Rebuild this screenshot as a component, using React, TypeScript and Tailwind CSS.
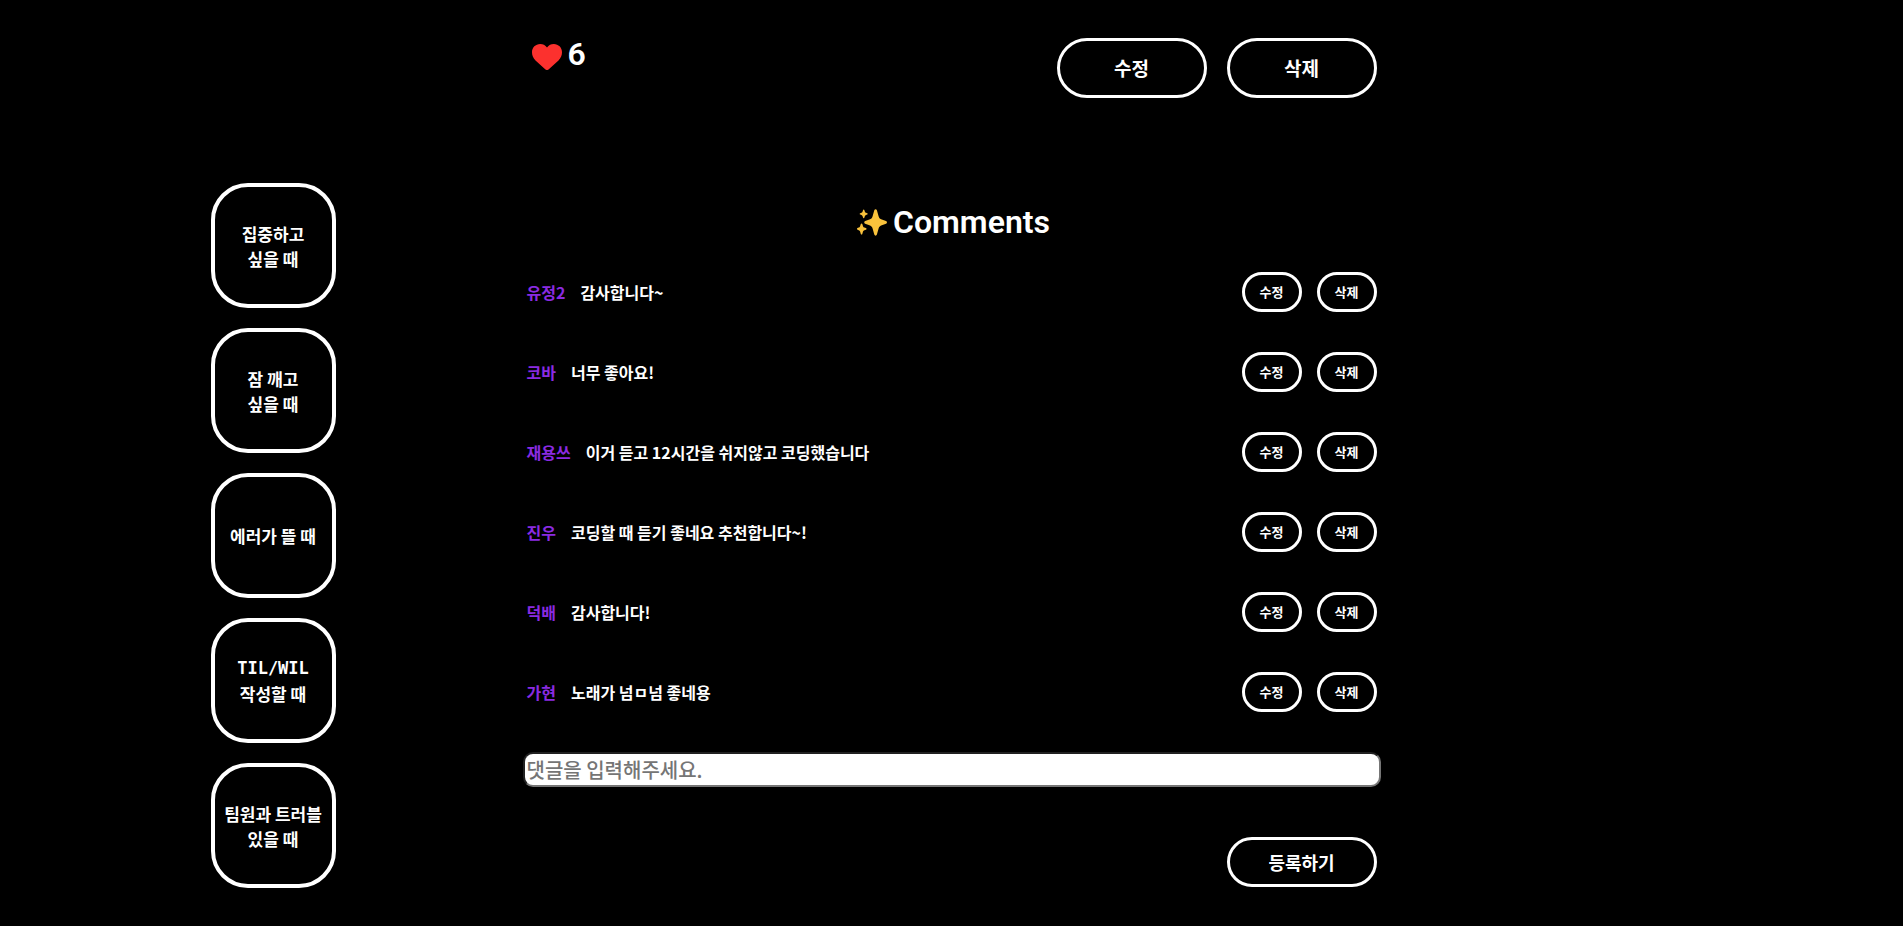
import { useState } from "react";
import clsx from "clsx";

interface Comment {
  id: number;
  name: string;
  text: string;
}

interface OutlineButtonProps {
  label: string;
  className?: string;
  type?: "button" | "submit";
}

const categories = [
  ["집중하고", "싶을 때"],
  ["잠 깨고", "싶을 때"],
  ["에러가 뜰 때"],
  ["TIL/WIL", "작성할 때"],
  ["팀원과 트러블", "있을 때"],
];

const comments: Comment[] = [
  { id: 1, name: "유정2", text: "감사합니다~" },
  { id: 2, name: "코바", text: "너무 좋아요!" },
  { id: 3, name: "재용쓰", text: "이거 듣고 12시간을 쉬지않고 코딩했습니다" },
  { id: 4, name: "진우", text: "코딩할 때 듣기 좋네요 추천합니다~!" },
  { id: 5, name: "덕배", text: "감사합니다!" },
  { id: 6, name: "가현", text: "노래가 넘ㅁ넘 좋네용" },
];

const OutlineButton = ({ label, className, type = "button" }: OutlineButtonProps) => (
  <button
    type={type}
    className={clsx(
      "shrink-0 cursor-pointer rounded-full border-[3px] border-white bg-black font-bold text-white",
      className
    )}
  >
    {label}
  </button>
);

const Heart = () => (
  <svg viewBox="0 0 30 26" className="h-[26px] w-[30px]" aria-hidden="true">
    <path
      d="M15 3.4C13.2 1.2 11 0 8.2 0 3.6 0 0 3.6 0 8.2c0 3 1.1 5.600 3.500 8.200l9.700 8.900c1.200 1 2.400 1 3.600 0l9.700-8.900C28.900 13.800 30 11.200 30 8.200 30 3.600 26.400 0 21.800 0 19 0 16.800 1.200 15 3.400Z"
      fill="#fc312e"
    />
  </svg>
);

const Sparkles = () => (
  <svg viewBox="0 0 30 27" className="h-[27px] w-[30px]" fill="#f9c23c" aria-hidden="true">
    <path d="M17.300 1.300c.4-1.500 2.200-1.500 2.600 0l1.700 6c.5 1.800 1.500 2.800 3.200 3.300l4.200 1.500c1.300.5 1.300 2.200 0 2.700l-4.200 1.500c-1.700.5-2.700 1.500-3.200 3.300l-1.700 6c-.4 1.500-2.200 1.500-2.600 0l-1.700-6c-.5-1.800-1.500-2.800-3.200-3.300l-4.200-1.500c-1.300-.5-1.300-2.200 0-2.700l4.200-1.500c1.700-.5 2.700-1.500 3.200-3.300Z" />
    <path d="M6 1.200c.2-.8 1.200-.8 1.400 0l.5 1.500c.2.600.5.900 1.100 1.100l1.200.4c.7.300.7 1.100 0 1.400l-1.200.4c-.6.200-.9.500-1.100 1.100l-.5 1.500c-.2.800-1.200.8-1.400 0l-.5-1.500c-.2-.6-.5-.9-1.100-1.100l-1.200-.4c-.7-.3-.7-1.100 0-1.400l1.200-.4c.6-.2.900-.5 1.100-1.100Z" />
    <path d="M3.800 15c.2-.8 1.300-.8 1.500 0l.7 2.200c.2.800.7 1.200 1.400 1.400l1.500.5c.8.300.8 1.300 0 1.600l-1.500.5c-.7.200-1.200.6-1.400 1.400L5.300 25c-.2.800-1.300.8-1.500 0l-.7-2.400c-.2-.8-.7-1.200-1.400-1.400l-1.200-.5c-.7-.3-.7-1.300 0-1.600l1.200-.5c.7-.2 1.200-.6 1.400-1.400Z" />
  </svg>
);

const CommentRow = ({ name, text }: Comment) => (
  <li className="flex h-10 items-center justify-between">
    <p className="flex gap-[15px] text-base font-bold">
      <span className="text-[#8a2be2]">{name}</span>
      <span>{text}</span>
    </p>
    <div className="flex gap-[15px]">
      <OutlineButton label="수정" className="h-10 w-[60px] text-[13px]" />
      <OutlineButton label="삭제" className="h-10 w-[60px] text-[13px]" />
    </div>
  </li>
);

const App = () => {
  const [draft, setDraft] = useState("");

  return (
    <div className="grid min-h-screen grid-cols-[1fr_minmax(0,850px)_1fr] bg-black pb-[39px] font-['Noto_Sans_CJK_KR',sans-serif] text-white">
      <nav className="flex flex-col items-end gap-5 pt-[183px] pr-[191px]">
        {categories.map((lines) => (
          <button
            key={lines.join(" ")}
            type="button"
            className="flex size-[125px] shrink-0 cursor-pointer flex-col items-center justify-center rounded-[37px] border-4 border-white text-[17px] leading-[25px] font-bold whitespace-nowrap"
          >
            {lines.map((line) => (
              <span
                key={line}
                className={clsx(/^[A-Z/]+$/.test(line) && "font-['DejaVu_Sans_Mono',monospace]")}
              >
                {line}
              </span>
            ))}
          </button>
        ))}
      </nav>

      <main className="pt-[38px]">
        <header className="flex items-start justify-between">
          <div className="flex items-start gap-[6px] pl-[5px]">
            <div className="pt-[6px]">
              <Heart />
            </div>
            <span className="font-['Roboto',sans-serif] text-[32px] leading-8 font-semibold">6</span>
          </div>
          <div className="flex gap-5">
            <OutlineButton label="수정" className="h-[60px] w-[150px] text-[19px]" />
            <OutlineButton label="삭제" className="h-[60px] w-[150px] text-[19px]" />
          </div>
        </header>

        <section>
          <h2 className="mt-[100px] mb-[26px] flex items-center justify-center gap-[6px] pl-1 font-['Roboto',sans-serif] text-[32px] leading-[48px] font-semibold">
            <Sparkles />
            Comments
          </h2>
          <ul className="flex flex-col gap-10">
            {comments.map((comment) => (
              <CommentRow key={comment.id} {...comment} />
            ))}
          </ul>
        </section>

        <form className="mt-10" onSubmit={(e) => e.preventDefault()}>
          <div className="-mx-1">
            <input
              type="text"
              aria-label="댓글"
              value={draft}
              onChange={(e) => setDraft(e.target.value)}
              placeholder="댓글을 입력해주세요."
              className="block h-[35px] w-full rounded-[10px] border-2 border-t-[#212121] border-r-[#767676] border-b-[#767676] border-l-[#212121] bg-white px-0.5 text-xl font-medium text-black placeholder:text-[#757575]"
            />
          </div>
          <div className="mt-[50px] flex justify-end">
            <OutlineButton type="submit" label="등록하기" className="h-[50px] w-[150px] text-lg" />
          </div>
        </form>
      </main>
    </div>
  );
};

export default App;
